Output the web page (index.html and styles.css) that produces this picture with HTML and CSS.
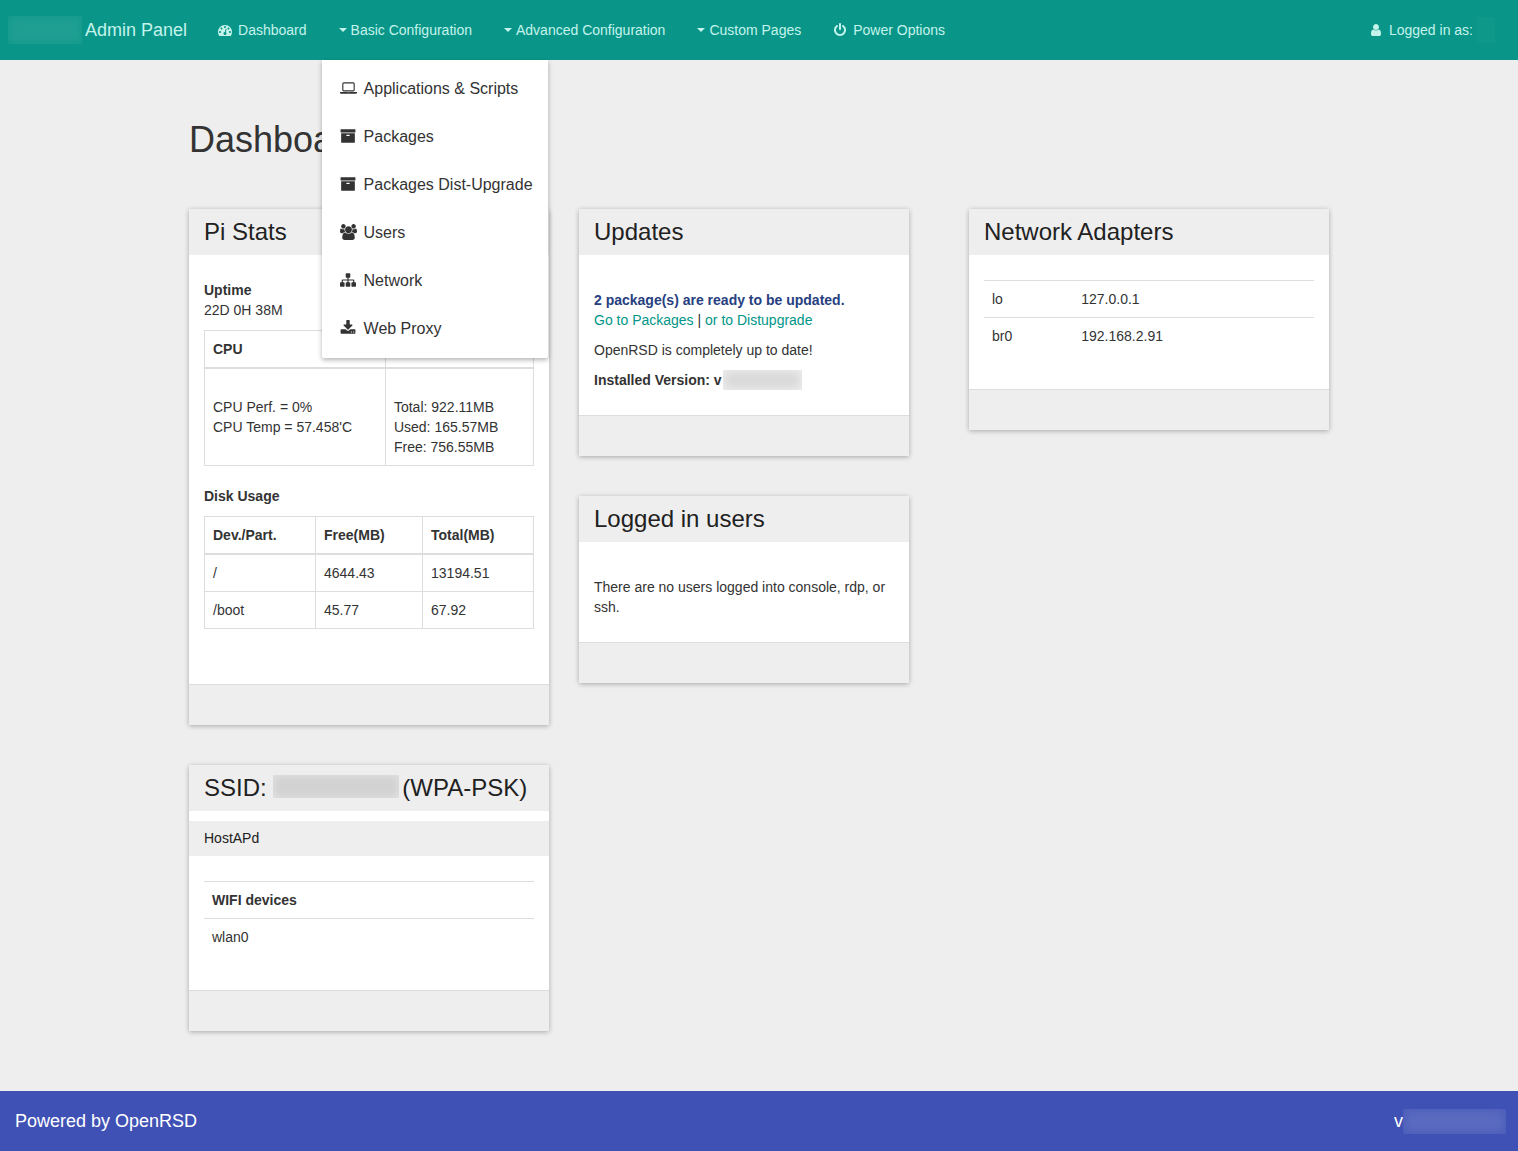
FILE: index.html
```html
<!DOCTYPE html>
<html lang="en">
<head>
  <meta charset="utf-8">
  <meta name="viewport" content="width=device-width, initial-scale=1">
  <title>Admin Panel - Dashboard</title>
  <link rel="stylesheet" href="styles.css">
</head>
<body>
  <header class="navbar">
    <a class="brand" href="#"><span class="mask mask-brand"></span>Admin Panel</a>
    <nav class="nav-links">
      <a class="nav-item" href="#">
        <span class="icon"><svg viewBox="0 0 1792 1792" aria-hidden="true"><path d="M384 1152q0-53-37.5-90.5t-90.5-37.5-90.5 37.5-37.5 90.5 37.5 90.5 90.5 37.5 90.5-37.5 37.5-90.5zm192-448q0-53-37.5-90.5t-90.5-37.5-90.5 37.5-37.5 90.5 37.5 90.5 90.5 37.5 90.5-37.5 37.5-90.5zm428 481l101-382q6-26-7.5-48.5t-38.5-29.5-48 6.5-30 39.5l-101 382q-60 5-107 43.5t-63 98.5q-20 77 20 146t117 89 146-20 89-117q16-60-6-117t-72-91zm660-33q0-53-37.5-90.5t-90.5-37.5-90.5 37.5-37.5 90.5 37.5 90.5 90.5 37.5 90.5-37.5 37.5-90.5zm-640-640q0-53-37.5-90.5t-90.5-37.5-90.5 37.5-37.5 90.5 37.5 90.5 90.5 37.5 90.5-37.5 37.5-90.5zm448 192q0-53-37.5-90.5t-90.5-37.5-90.5 37.5-37.5 90.5 37.5 90.5 90.5 37.5 90.5-37.5 37.5-90.5zm320 448q0 261-141 483-19 29-54 29h-1402q-35 0-54-29-141-221-141-483 0-182 71-348t191-286 286-191 348-71 348 71 286 191 191 286 71 348z"/></svg></span>
        <span>Dashboard</span>
      </a>
      <div class="dropdown">
        <button class="nav-item" type="button" aria-expanded="true" aria-controls="basic-menu"><span class="caret"></span><span>Basic Configuration</span></button>
        <ul class="menu" id="basic-menu">
          <li><a href="#"><span class="icon"><svg class="wide" viewBox="0 0 1920 1792" aria-hidden="true"><path d="M416 1280q-66 0-113-47t-47-113v-704q0-66 47-113t113-47h1088q66 0 113 47t47 113v704q0 66-47 113t-113 47h-1088zm-32-864v704q0 13 9.5 22.5t22.5 9.5h1088q13 0 22.5-9.5t9.5-22.5v-704q0-13-9.5-22.5t-22.5-9.5h-1088q-13 0-22.5 9.5t-9.5 22.5zm1376 928h160v96q0 40-47 68t-113 28h-1600q-66 0-113-28t-47-68v-96h1760zm-720 96q16 0 16-16t-16-16h-160q-16 0-16 16t16 16h160z"/></svg></span><span>Applications &amp; Scripts</span></a></li>
          <li><a href="#"><span class="icon"><svg viewBox="0 0 1792 1792" aria-hidden="true"><path d="M1088 832q0-26-19-45t-45-19h-256q-26 0-45 19t-19 45 19 45 45 19h256q26 0 45-19t19-45zm576-192v960q0 26-19 45t-45 19h-1408q-26 0-45-19t-19-45v-960q0-26 19-45t45-19h1408q26 0 45 19t19 45zm64-448v256q0 26-19 45t-45 19h-1536q-26 0-45-19t-19-45v-256q0-26 19-45t45-19h1536q26 0 45 19t19 45z"/></svg></span><span>Packages</span></a></li>
          <li><a href="#"><span class="icon"><svg viewBox="0 0 1792 1792" aria-hidden="true"><path d="M1088 832q0-26-19-45t-45-19h-256q-26 0-45 19t-19 45 19 45 45 19h256q26 0 45-19t19-45zm576-192v960q0 26-19 45t-45 19h-1408q-26 0-45-19t-19-45v-960q0-26 19-45t45-19h1408q26 0 45 19t19 45zm64-448v256q0 26-19 45t-45 19h-1536q-26 0-45-19t-19-45v-256q0-26 19-45t45-19h1536q26 0 45 19t19 45z"/></svg></span><span>Packages Dist-Upgrade</span></a></li>
          <li><a href="#"><span class="icon"><svg class="wide" viewBox="0 0 1920 1792" aria-hidden="true"><path d="M593 896q-162 5-265 128h-134q-82 0-138-40.5t-56-118.5q0-353 124-353 6 0 43.5 21t97.5 42.5 119 21.5q67 0 133-23-5 37-5 66 0 139 81 256zm1071 637q0 120-73 189.5t-194 69.5h-874q-121 0-194-69.5t-73-189.5q0-53 3.5-103.5t14-109 26.5-108.5 43-97.5 62-81 85.5-53.5 111.5-20q10 0 43 21.5t73 48 107 48 135 21.5 135-21.5 107-48 73-48 43-21.5q61 0 111.5 20t85.5 53.5 62 81 43 97.5 26.5 108.5 14 109 3.5 103.5zm-1024-1277q0 106-75 181t-181 75-181-75-75-181 75-181 181-75 181 75 75 181zm704 384q0 159-112.5 271.5t-271.5 112.5-271.5-112.5-112.5-271.5 112.5-271.5 271.5-112.5 271.5 112.5 112.5 271.5zm576 225q0 78-56 118.5t-138 40.5h-134q-103-123-265-128 81-117 81-256 0-29-5-66 66 23 133 23 59 0 119-21.5t97.5-42.5 43.5-21q124 0 124 353zm-128-609q0 106-75 181t-181 75-181-75-75-181 75-181 181-75 181 75 75 181z"/></svg></span><span>Users</span></a></li>
          <li><a href="#"><span class="icon"><svg viewBox="0 0 1792 1792" aria-hidden="true"><path d="M1792 1248v320q0 40-28 68t-68 28h-320q-40 0-68-28t-28-68v-320q0-40 28-68t68-28h96v-192h-512v192h96q40 0 68 28t28 68v320q0 40-28 68t-68 28h-320q-40 0-68-28t-28-68v-320q0-40 28-68t68-28h96v-192h-512v192h96q40 0 68 28t28 68v320q0 40-28 68t-68 28h-320q-40 0-68-28t-28-68v-320q0-40 28-68t68-28h96v-192q0-52 38-90t90-38h512v-192h-96q-40 0-68-28t-28-68v-320q0-40 28-68t68-28h320q40 0 68 28t28 68v320q0 40-28 68t-68 28h-96v192h512q52 0 90 38t38 90v192h96q40 0 68 28t28 68z"/></svg></span><span>Network</span></a></li>
          <li><a href="#"><span class="icon"><svg viewBox="0 0 1792 1792" aria-hidden="true"><path d="M1344 1344q0-26-19-45t-45-19-45 19-19 45 19 45 45 19 45-19 19-45zm256 0q0-26-19-45t-45-19-45 19-19 45 19 45 45 19 45-19 19-45zm128-224v320q0 40-28 68t-68 28h-1472q-40 0-68-28t-28-68v-320q0-40 28-68t68-28h465l135 136q58 56 136 56t136-56l136-136h464q40 0 68 28t28 68zm-325-569q17 41-14 70l-448 448q-18 19-45 19t-45-19l-448-448q-31-29-14-70 17-39 59-39h256v-448q0-26 19-45t45-19h256q26 0 45 19t19 45v448h256q42 0 59 39z"/></svg></span><span>Web Proxy</span></a></li>
        </ul>
      </div>
      <button class="nav-item" type="button"><span class="caret"></span><span>Advanced Configuration</span></button>
      <button class="nav-item" type="button"><span class="caret"></span><span>Custom Pages</span></button>
      <a class="nav-item" href="#">
        <span class="icon"><svg viewBox="0 0 1792 1792" aria-hidden="true"><path d="M1664 896q0 156-61 298t-164 245-245 164-298 61-298-61-245-164-164-245-61-298q0-182 80.5-343t226.5-270q43-32 95.5-25t83.5 50q32 42 24.5 94.5t-49.5 84.5q-98 74-151.5 181t-53.5 228q0 104 40.5 198.5t109.5 163.5 163.5 109.5 198.5 40.5 198.5-40.5 163.5-109.5 109.5-163.5 40.5-198.5q0-121-53.5-228t-151.5-181q-42-32-49.5-84.5t24.5-94.5q31-43 84-50t95 25q146 109 226.5 270t80.5 343zm-640-768v640q0 52-38 90t-90 38-90-38-38-90v-640q0-52 38-90t90-38 90 38 38 90z"/></svg></span>
        <span>Power Options</span>
      </a>
    </nav>
    <a class="nav-item nav-user" href="#">
      <span class="icon"><svg viewBox="0 0 1792 1792" aria-hidden="true"><path d="M1536 1399q0 109-62.5 187t-150.5 78h-854q-88 0-150.5-78t-62.5-187q0-85 8.5-160.5t31.5-152 58.5-131 94-89 134.5-34.5q131 128 313 128t313-128q76 0 134.5 34.5t94 89 58.5 131 31.5 152 8.5 160.5zm-256-887q0 159-112.5 271.5t-271.5 112.5-271.5-112.5-112.5-271.5 112.5-271.5 271.5-112.5 271.5 112.5 112.5 271.5z"/></svg></span>
      <span>Logged in as:</span><span class="mask mask-user"></span>
    </a>
  </header>

  <main class="container">
    <h1>Dashboard</h1>
    <div class="columns">
      <div class="column">
        <section class="card">
          <h2 class="card-title">Pi Stats</h2>
          <div class="card-body card-body-tall">
            <p><strong>Uptime</strong><br>22D 0H 38M</p>
            <table class="table bordered usage">
              <thead><tr><th>CPU</th><th>RAM</th></tr></thead>
              <tbody>
                <tr>
                  <td><br>CPU Perf. = 0%<br>CPU Temp = 57.458'C</td>
                  <td><br>Total: 922.11MB<br>Used: 165.57MB<br>Free: 756.55MB</td>
                </tr>
              </tbody>
            </table>
            <p><strong>Disk Usage</strong></p>
            <table class="table bordered">
              <thead><tr><th>Dev./Part.</th><th>Free(MB)</th><th>Total(MB)</th></tr></thead>
              <tbody>
                <tr><td>/</td><td>4644.43</td><td>13194.51</td></tr>
                <tr><td>/boot</td><td>45.77</td><td>67.92</td></tr>
              </tbody>
            </table>
          </div>
          <div class="card-footer"></div>
        </section>
        <section class="card">
          <h2 class="card-title">SSID: <span class="mask mask-ssid"></span>(WPA-PSK)</h2>
          <h3 class="card-subtitle">HostAPd</h3>
          <div class="card-body">
            <table class="table">
              <thead><tr><th>WIFI devices</th></tr></thead>
              <tbody><tr><td>wlan0</td></tr></tbody>
            </table>
          </div>
          <div class="card-footer"></div>
        </section>
      </div>

      <div class="column column-narrow">
        <section class="card">
          <h2 class="card-title">Updates</h2>
          <div class="card-body card-body-text">
            <p><strong class="notice">2 package(s) are ready to be updated.</strong><br><a href="#">Go to Packages</a> | <a href="#">or to Distupgrade</a></p>
            <p>OpenRSD is completely up to date!</p>
            <p><strong>Installed Version: v</strong><span class="mask mask-version"></span></p>
          </div>
          <div class="card-footer"></div>
        </section>
        <section class="card">
          <h2 class="card-title">Logged in users</h2>
          <div class="card-body card-body-text">
            <p>There are no users logged into console, rdp, or ssh.</p>
          </div>
          <div class="card-footer"></div>
        </section>
      </div>

      <div class="column">
        <section class="card">
          <h2 class="card-title">Network Adapters</h2>
          <div class="card-body">
            <table class="table">
              <tbody>
                <tr><td>lo</td><td>127.0.0.1</td></tr>
                <tr><td>br0</td><td>192.168.2.91</td></tr>
              </tbody>
            </table>
          </div>
          <div class="card-footer"></div>
        </section>
      </div>
    </div>
  </main>

  <footer class="footer">
    <span>Powered by OpenRSD</span>
    <span class="footer-version">v<span class="mask mask-footer"></span></span>
  </footer>
</body>
</html>
```
FILE: styles.css
```css
* {
  box-sizing: border-box;
}

body {
  display: flex;
  flex-direction: column;
  min-height: 100vh;
  margin: 0;
  background: #eee;
  color: #333;
  font: 14px/20px "Liberation Sans", Arial, sans-serif;
}

a {
  color: #009688;
  text-decoration: none;
}

p {
  margin: 0 0 10px;
}

/* Navigation */
.navbar {
  display: flex;
  align-items: stretch;
  height: 60px;
  padding: 0 8px;
  background: #099688;
}

.brand {
  display: flex;
  align-items: center;
  gap: 3px;
  padding-right: 14px;
  color: #c4f3ec;
  font-size: 18px;
}

.nav-links {
  display: flex;
}

.nav-item {
  display: flex;
  align-items: center;
  gap: 4px;
  height: 60px;
  padding: 0 15px;
  border: 0;
  background: none;
  color: #c4f3ec;
  font: inherit;
  cursor: pointer;
}

.nav-user {
  margin-left: auto;
}

.icon {
  display: flex;
  justify-content: center;
  width: 18px;
}

.icon svg {
  width: 14px;
  height: 14px;
  fill: currentColor;
}

.caret {
  margin-left: 2px;
  border-top: 4px solid;
  border-right: 4px solid transparent;
  border-left: 4px solid transparent;
}

.dropdown {
  position: relative;
}

.menu {
  position: absolute;
  top: 100%;
  left: 0;
  z-index: 10;
  margin: 0;
  padding: 5px 0;
  border-radius: 0 0 2px 2px;
  background: #fff;
  box-shadow: 0 2px 5px rgba(0, 0, 0, 0.3);
  list-style: none;
  white-space: nowrap;
}

.menu a {
  display: flex;
  align-items: center;
  gap: 5px;
  height: 48px;
  padding: 0 15px 0 16px;
  color: #333;
  font-size: 16px;
}

.menu .icon {
  width: 21px;
  padding-bottom: 2px;
}

.menu .icon svg {
  width: 16px;
  height: 16px;
}

.menu .icon .wide {
  width: 17px;
}

/* Page */
.container {
  flex: 1;
  width: 100%;
  max-width: 1170px;
  margin: 0 auto;
  padding: 60px 15px 20px;
}

h1 {
  margin: 0 0 49px;
  font-size: 36px;
  font-weight: 400;
  line-height: 40px;
}

.columns {
  display: grid;
  grid-template-columns: repeat(3, 1fr);
  gap: 30px;
}

.column-narrow {
  padding-right: 30px;
}

/* Cards */
.card {
  margin-bottom: 40px;
  border-radius: 2px;
  background: #fff;
  box-shadow: 0 1px 5px rgba(0, 0, 0, 0.3);
}

.card-title {
  margin: 0;
  padding: 10px 15px;
  background: #eee;
  color: #212121;
  font-size: 24px;
  font-weight: 400;
  line-height: 26px;
}

.card-subtitle {
  margin: 10px 0 0;
  padding: 7px 15px 8px;
  background: #eee;
  color: #212121;
  font-size: 14px;
  font-weight: 400;
}

.card-body {
  padding: 25px 15px 15px;
}

.card-body-text {
  padding-top: 35px;
}

.card-body-tall {
  padding-bottom: 35px;
}

.card-footer {
  height: 41px;
  border-top: 1px solid #ddd;
  background: #eee;
}

.notice {
  color: #264080;
}

/* Tables */
.table {
  width: 100%;
  margin-bottom: 20px;
  border-collapse: collapse;
}

.table th,
.table td {
  padding: 8px;
  border-top: 1px solid #ddd;
  text-align: left;
  vertical-align: top;
}

.table.bordered th,
.table.bordered td {
  border: 1px solid #ddd;
}

.table.bordered th {
  border-bottom-width: 2px;
}

.usage th:first-child {
  width: 55%;
}

/* Blurred-out values */
.mask {
  display: inline-block;
}

.mask-brand {
  width: 74px;
  height: 28px;
  background: #1f9f92;
  box-shadow: inset 0 0 10px #0f988a;
}

.mask-user {
  width: 18px;
  height: 26px;
  background: #0e988a;
}

.mask-ssid {
  width: 126px;
  height: 23px;
  margin-right: 3px;
  background: #d2d2d2;
  box-shadow: inset 0 0 10px #e4e4e4;
  vertical-align: -2px;
}

.mask-version {
  width: 79px;
  height: 20px;
  margin-left: 1px;
  background: #d8d8d8;
  box-shadow: inset 0 0 12px #f4f4f4;
  vertical-align: bottom;
}

/* Footer */
.footer {
  display: flex;
  align-items: center;
  justify-content: space-between;
  height: 60px;
  padding: 0 12px 0 15px;
  background: #3f51b5;
  color: #fff;
  font-size: 18px;
}

.footer-version {
  display: flex;
  align-items: center;
}

.mask-footer {
  width: 103px;
  height: 25px;
  background: #5b6bc0;
  box-shadow: inset 0 0 12px #4658b8;
}
```
